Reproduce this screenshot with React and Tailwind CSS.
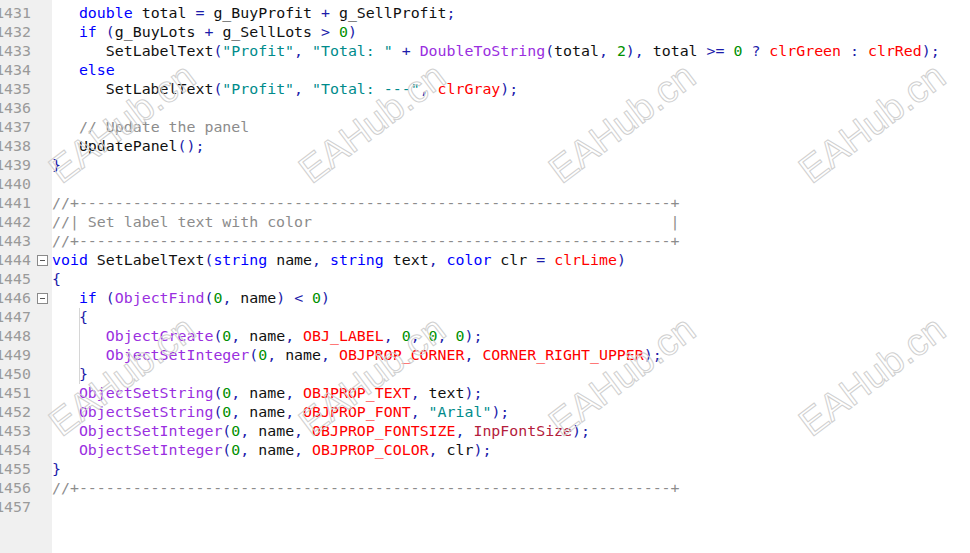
import React from "react";

const KEYWORDS = new Set(["double", "if", "else", "void", "string", "color"]);
const FUNCS = new Set(["DoubleToString", "ObjectFind", "ObjectCreate", "ObjectSetInteger", "ObjectSetString"]);
const CONSTS = new Set([
  "clrGreen", "clrRed", "clrGray", "clrLime", "OBJ_LABEL", "OBJPROP_CORNER", "CORNER_RIGHT_UPPER",
  "OBJPROP_TEXT", "OBJPROP_FONT", "OBJPROP_FONTSIZE", "OBJPROP_COLOR",
]);
const INPUTS = new Set(["InpFontSize"]);

const colors = {
  kw: "text-[#0000ff]",
  fn: "text-[#9a2fe0]",
  cst: "text-[#ff0000]",
  inp: "text-[#b4203c]",
  str: "text-[#008b8b]",
  num: "text-[#009000]",
  com: "text-[#8c8c8c]",
  op: "text-[#1c1caa]",
  id: "text-[#111111]",
  sp: "",
};

const rule = "//+" + "-".repeat(66) + "+";
const box = "//| Set label text with color".padEnd(69, " ") + "|";

const lines = [
  { n: 1431, t: "   double total = g_BuyProfit + g_SellProfit;" },
  { n: 1432, t: "   if (g_BuyLots + g_SellLots > 0)" },
  { n: 1433, t: '      SetLabelText("Profit", "Total: " + DoubleToString(total, 2), total >= 0 ? clrGreen : clrRed);' },
  { n: 1434, t: "   else" },
  { n: 1435, t: '      SetLabelText("Profit", "Total: ---", clrGray);' },
  { n: 1436, t: "" },
  { n: 1437, t: "   // Update the panel" },
  { n: 1438, t: "   UpdatePanel();" },
  { n: 1439, t: "}" },
  { n: 1440, t: "" },
  { n: 1441, t: rule },
  { n: 1442, t: box },
  { n: 1443, t: rule },
  { n: 1444, t: "void SetLabelText(string name, string text, color clr = clrLime)", fold: true },
  { n: 1445, t: "{" },
  { n: 1446, t: "   if (ObjectFind(0, name) < 0)", fold: true },
  { n: 1447, t: "   {", guide: true },
  { n: 1448, t: "      ObjectCreate(0, name, OBJ_LABEL, 0, 0, 0);", guide: true },
  { n: 1449, t: "      ObjectSetInteger(0, name, OBJPROP_CORNER, CORNER_RIGHT_UPPER);", guide: true },
  { n: 1450, t: "   }", guide: true },
  { n: 1451, t: "   ObjectSetString(0, name, OBJPROP_TEXT, text);" },
  { n: 1452, t: '   ObjectSetString(0, name, OBJPROP_FONT, "Arial");' },
  { n: 1453, t: "   ObjectSetInteger(0, name, OBJPROP_FONTSIZE, InpFontSize);" },
  { n: 1454, t: "   ObjectSetInteger(0, name, OBJPROP_COLOR, clr);" },
  { n: 1455, t: "}" },
  { n: 1456, t: rule },
  { n: 1457, t: "" },
];

// tiny highlighter, good enough for these lines
function tokenize(text) {
  const out = [];
  let i = 0;
  while (i < text.length) {
    const rest = text.slice(i);
    let m;
    if (rest.startsWith("//")) {
      out.push(["com", rest]);
      break;
    } else if ((m = rest.match(/^ +/))) {
      out.push(["sp", m[0]]);
    } else if ((m = rest.match(/^"[^"]*"/))) {
      out.push(["str", m[0]]);
    } else if ((m = rest.match(/^\d+/))) {
      out.push(["num", m[0]]);
    } else if ((m = rest.match(/^[A-Za-z_]\w*/))) {
      const w = m[0];
      const type = KEYWORDS.has(w) ? "kw" : FUNCS.has(w) ? "fn" : CONSTS.has(w) ? "cst" : INPUTS.has(w) ? "inp" : "id";
      out.push([type, w]);
    } else {
      m = [rest[0]];
      out.push(["op", rest[0]]);
    }
    i += m[0].length;
  }
  return out;
}

const marks = [
  "left-[122px] top-[123px]",
  "left-[372px] top-[123px]",
  "left-[622px] top-[123px]",
  "left-[872px] top-[123px]",
  "left-[122px] top-[376px]",
  "left-[372px] top-[376px]",
  "left-[622px] top-[376px]",
  "left-[872px] top-[376px]",
];

export default function App() {
  return (
    <div className="relative w-[970px] h-[553px] overflow-hidden bg-white font-['DejaVu_Sans_Mono',monospace] text-[14.9px]">
      <div className="flex h-full">
        {/* gutter */}
        <div className="w-[52px] shrink-0 h-full bg-[#f0f0f0] pt-[4px]">
          {lines.map((l) => (
            <div key={l.n} className="flex h-[19px] leading-[19px]">
              <div className="w-[31px] min-w-0 shrink-0 flex justify-end">
                <span className="text-[#9a9a9a] whitespace-nowrap">{l.n}</span>
              </div>
              <span className="flex items-center pl-[6px]">
                {l.fold && (
                  <span className="w-[11px] h-[11px] border border-[#8a8a8a] bg-white flex items-center justify-center">
                    <span className="w-[5px] h-px bg-[#555555]" />
                  </span>
                )}
              </span>
            </div>
          ))}
        </div>

        {/* code */}
        <div className="flex-1 pt-[4px]">
          {lines.map((l) => (
            <div key={l.n} className="relative h-[19px] leading-[19px] whitespace-pre">
              {l.guide && <span className="absolute left-[27px] top-0 h-[19px] w-px bg-[#d6d6d6]" />}
              {tokenize(l.t).map(([type, s], i) => (
                <span key={i} className={colors[type]}>
                  {s}
                </span>
              ))}
            </div>
          ))}
        </div>
      </div>

      {/* watermark */}
      {marks.map((pos) => (
        <div
          key={pos}
          className={`pointer-events-none absolute ${pos} -translate-x-1/2 -translate-y-1/2 -rotate-[37deg] font-['Liberation_Sans',sans-serif] text-[38px] leading-none text-transparent whitespace-nowrap [-webkit-text-stroke:1px_#d0d0d0]`}
        >
          EAHub.cn
        </div>
      ))}
    </div>
  );
}
